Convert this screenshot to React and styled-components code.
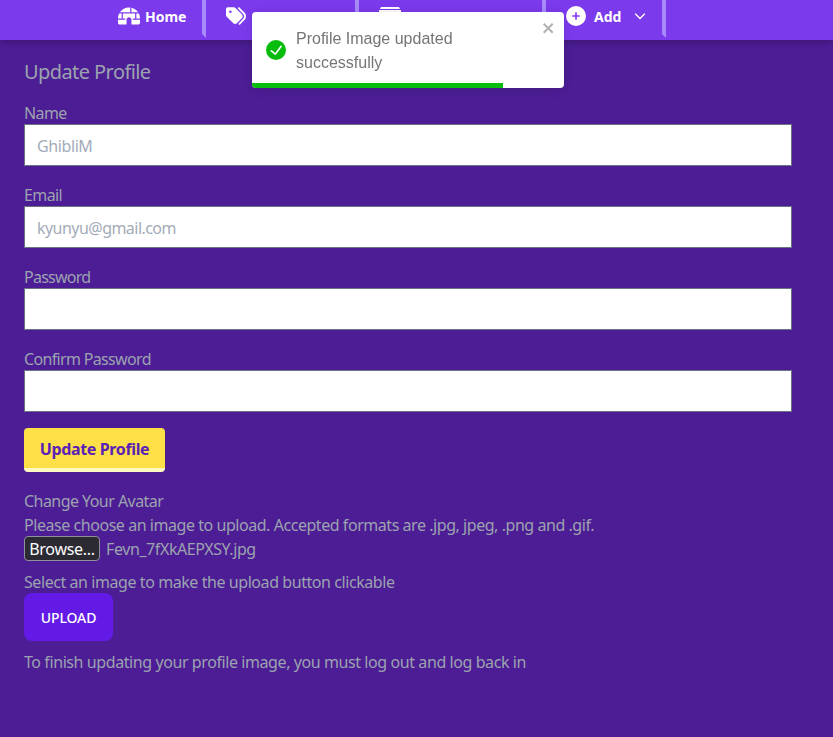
import React from "react";
import styled, { createGlobalStyle } from "styled-components";
import { FaIgloo, FaTags } from "react-icons/fa6";

const Global = createGlobalStyle`
  *, *::before, *::after { box-sizing: border-box; }
  body { margin: 0; background: #4c1d95; color: #9ca3af; font: 16px/24px "Noto Sans", "Open Sans", sans-serif; overflow: hidden; }
  p, h1 { margin: 0; font-weight: 400; }
  button, input { font: inherit; }
`;
const Page = styled.div`min-height: 737px;`;
const Nav = styled.nav`
  display: flex;
  height: 40px;
  padding-left: 98px;
  background: #7c3aed;
  box-shadow: 0 4px 6px -1px rgba(0, 0, 0, 0.12), 0 2px 4px -1px rgba(0, 0, 0, 0.1);
`;
const NavItem = styled.a`
  display: flex;
  align-items: center;
  width: ${(p) => p.$width}px;
  height: 38px;
  padding: 0 0 0 20px;
  border-right: 4px solid #a78bfa;
  border-bottom: 4px solid transparent;
  color: #fff;
  font-size: 14px;
  font-weight: 700;
  line-height: 20px;
  white-space: nowrap;
`;
const NavIcon = styled.span`
  display: flex;
  flex: none;
  margin-right: ${(p) => p.$gap || 0}px;
  padding-bottom: ${(p) => p.$lift || 0}px;
`;
const PlusDisc = styled.span`
  display: grid;
  place-items: center;
  flex: none;
  width: 20px;
  height: 20px;
  margin-right: 8px;
  margin-bottom: 2px;
  border-radius: 50%;
  background: #fff;
  color: #7c3aed;
`;
const Chevron = styled.svg`margin: 0 0 3px 13px; flex: none;`;
const Main = styled.main`padding: 18px 41px 0 24px;`;
const Heading = styled.h1`font-size: 20px; line-height: 28px; letter-spacing: -0.58px; margin-bottom: 14px;`;
const Field = styled.div`margin-bottom: 16px;`;
const Text = styled.p`
  letter-spacing: ${(p) => p.$track || 0}px;
  margin-top: ${(p) => p.$top || 0}px;
  white-space: nowrap;
`;
const Label = styled.label`
  display: block;
  height: 24px;
  line-height: 27px;
  letter-spacing: ${(p) => p.$track}px;
`;
const Input = styled.input`
  display: block;
  width: 768px;
  height: 42px;
  margin: 0;
  padding: 9px 12px 7px;
  border: 1px solid #6b7280;
  border-radius: 0;
  background: #fff;
  letter-spacing: ${(p) => p.$track || 0}px;
  outline: none;
  &::placeholder { color: #a3acb9; opacity: 1; }
`;
const Form = styled.form`
  display: block;
  margin-bottom: 17px;
`;
const SaveButton = styled.button`
  display: block;
  width: 141px;
  height: 44px;
  padding: 1px 0 0;
  border: 0;
  border-bottom: 4px solid #fef9c3;
  border-radius: 4px;
  background: #fde047;
  color: #5b21b6;
  font-weight: 700;
  line-height: 24px;
  letter-spacing: -0.36px;
`;
const FileRow = styled.div`display: flex; align-items: center; height: 25px; margin-top: -1px; gap: 6px;`;
const Browse = styled.button`
  width: 76px;
  height: 25px;
  padding: 0;
  border: 1px solid #8f8f9d;
  border-radius: 4px;
  background: #2b2a33;
  color: #fbfbfe;
  line-height: 22px;
  letter-spacing: -0.3px;
`;
const Upload = styled.button`
  display: block;
  width: 89px;
  height: 48px;
  margin-top: -1px;
  padding: 2px 0 0;
  border: 0;
  border-radius: 8px;
  background: #641ae6;
  color: #fff;
  font-size: 14px;
  font-weight: 500;
  letter-spacing: -0.1px;
`;
const Toast = styled.div`
  position: fixed;
  top: 12px;
  left: 252px;
  display: flex;
  width: 312px;
  height: 76px;
  padding: 14px;
  border-radius: 4px;
  background: #fff;
  color: #757575;
  font-family: "Liberation Sans", Arial, sans-serif;
  box-shadow: 0 1px 10px rgba(0, 0, 0, 0.1), 0 2px 15px rgba(0, 0, 0, 0.05);
  overflow: hidden;
`;
const ToastIcon = styled.svg`flex: none; margin: 14px 10px 0 0;`;
const ToastText = styled.div`width: 200px; padding-top: 1px;`;
const Close = styled.svg`position: absolute; top: 8px; right: 7px; color: #b2b2b2;`;
const Progress = styled.div`position: absolute; left: 0; bottom: 0; width: 251px; height: 5px; background: #07bc0c;`;

const fields = [
  { label: "Name", track: -0.6, placeholder: "GhibliM", inner: -0.4 },
  { label: "Email", track: -0.6, placeholder: "kyunyu@gmail.com", inner: -0.54 },
  { label: "Password", track: -0.75, type: "password" },
  { label: "Confirm Password", track: -0.66, type: "password" },
];

export default function App() {
  return (
    <Page>
      <Global />
      <Nav>
        <NavItem $width={108}>
          <NavIcon $gap={5} $lift={2}>
            <FaIgloo size={22} />
          </NavIcon>
          Home
        </NavItem>
        <NavItem $width={153}>
          <NavIcon $lift={3}>
            <FaTags size={20} />
          </NavIcon>
        </NavItem>
        <NavItem $width={187}>
          <NavIcon>
            <svg width="22" height="20" viewBox="0 0 22 20" fill="#fff">
              <path d="M2 0h18l1 2H1z" />
              <path d="M0 3h22v14a2 2 0 0 1-2 2H2a2 2 0 0 1-2-2z" />
            </svg>
          </NavIcon>
        </NavItem>
        <NavItem $width={120}>
          <PlusDisc>
            <svg width="8" height="8" viewBox="0 0 8 8" fill="none" stroke="currentColor" strokeWidth="1.6" strokeLinecap="round">
              <path d="M4 .8v6.4M.8 4h6.4" />
            </svg>
          </PlusDisc>
          Add
          <Chevron width="12" height="12" viewBox="0 0 12 12" fill="none" stroke="#fff" strokeWidth="1.3" strokeLinecap="round" strokeLinejoin="round">
            <path d="M1.5 4 6 8.5 10.5 4" />
          </Chevron>
        </NavItem>
      </Nav>
      <Main>
        <Heading>Update Profile</Heading>
        <Form>
          {fields.map((f) => (
            <Field key={f.label}>
              <Label $track={f.track}>{f.label}</Label>
              <Input type={f.type || "text"} placeholder={f.placeholder} $track={f.inner} />
            </Field>
          ))}
          <SaveButton type="button">Update Profile</SaveButton>
        </Form>
        <Text $track={-0.55}>Change Your Avatar</Text>
        <Text $track={-0.45}>Please choose an image to upload. Accepted formats are .jpg, jpeg, .png and .gif.</Text>
        <FileRow>
          <Browse>Browse...</Browse>
          <Text $track={-0.41}>Fevn_7fXkAEPXSY.jpg</Text>
        </FileRow>
        <Text $top={9} $track={-0.43}>Select an image to make the upload button clickable</Text>
        <Upload>UPLOAD</Upload>
        <Text $top={9} $track={-0.415}>To finish updating your profile image, you must log out and log back in</Text>
      </Main>
      <Toast role="alert">
        <ToastIcon width="20" height="20" viewBox="0 0 24 24" fill="#07bc0c">
          <path d="M12 0a12 12 0 1012 12A12.014 12.014 0 0012 0zm6.927 8.2l-6.845 9.289a1.011 1.011 0 01-1.43.188l-4.888-3.908a1 1 0 111.25-1.562l4.076 3.261 6.227-8.451a1 1 0 111.61 1.183z" />
        </ToastIcon>
        <ToastText>Profile Image updated successfully</ToastText>
        <Close width="16" height="16" viewBox="-1 0 16 16" fill="currentColor">
          <path fillRule="evenodd" d="M7.71 8.23l3.75 3.75-1.48 1.48-3.75-3.75-3.75 3.75L1 11.98l3.75-3.75L1 4.48 2.48 3l3.75 3.75L9.98 3l1.48 1.48-3.75 3.75z" />
        </Close>
        <Progress />
      </Toast>
    </Page>
  );
}
